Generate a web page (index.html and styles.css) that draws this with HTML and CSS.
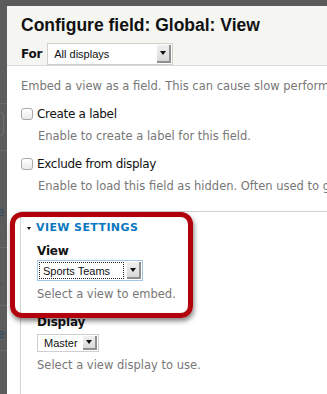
FILE: index.html
```html
<!DOCTYPE html>
<html>
<head>
<meta charset="utf-8">
<link rel="stylesheet" href="styles.css">
</head>
<body>
<div class="backdrop">
  <div class="under">
    <span class="uline" style="top:103px"></span>
    <span class="ubtn"></span>
    <span class="uline" style="top:150px"></span>
    <span class="uline" style="top:247px"></span>
    <span class="uline" style="top:305px"></span>
    <span class="uline" style="top:350px"></span>
    <span class="frag f1">e</span>
    <span class="frag f2">r</span>
    <span class="frag f3">e</span>
  </div>
  <div class="modal">
    <div class="header">
      <h1 class="title">Configure field: Global: View</h1>
      <div class="for-row">
        <span class="for-label">For</span>
        <div class="select sel-for">
          <span class="sel-text">All displays</span>
          <span class="sel-btn"><span class="arrow"></span></span>
        </div>
      </div>
    </div>
    <div class="body">
      <p class="intro">Embed a view as a field. This can cause slow performance.</p>
      <div class="check-item first">
        <div class="check-row"><span class="checkbox"></span><span class="check-label">Create a label</span></div>
        <div class="desc indent">Enable to create a label for this field.</div>
      </div>
      <div class="check-item">
        <div class="check-row"><span class="checkbox"></span><span class="check-label">Exclude from display</span></div>
        <div class="desc indent">Enable to load this field as hidden. Often used to group fields.</div>
      </div>
      <div class="fieldset">
        <div class="legend"><span class="tri"></span><span>VIEW SETTINGS</span></div>
        <div class="fs-body">
          <div class="form-item first">
            <div class="item-label">View</div>
            <div class="select sel-view">
              <span class="sel-text dotted">Sports Teams</span>
              <span class="sel-btn"><span class="arrow"></span></span>
            </div>
            <div class="desc">Select a view to embed.</div>
          </div>
          <div class="form-item second">
            <div class="item-label">Display</div>
            <div class="select sel-display">
              <span class="sel-text">Master</span>
              <span class="sel-btn"><span class="arrow"></span></span>
            </div>
            <div class="desc">Select a view display to use.</div>
          </div>
        </div>
      </div>
    </div>
    <div class="highlight"></div>
  </div>
</div>
</body>
</html>
```

FILE: styles.css
```css
html, body {
  margin: 0;
  padding: 0;
  width: 327px;
  height: 394px;
  overflow: hidden;
}
body {
  font-family: "DejaVu Sans", sans-serif;
  background: #5a5a5a;
}
.backdrop {
  position: relative;
  width: 327px;
  height: 394px;
  overflow: hidden;
  display: flex;
  background: #5a5a5a;
}
.under {
  position: absolute;
  left: 0;
  top: 0;
  width: 7px;
  height: 394px;
  background: #5c5c5c;
}
.uline {
  position: absolute;
  left: 0;
  width: 7px;
  height: 1px;
  background: #6a6a6a;
}
.ubtn {
  position: absolute;
  left: -6px;
  top: 112px;
  width: 8px;
  height: 22px;
  border: 1px solid #707070;
  border-radius: 4px;
}
.frag {
  position: absolute;
  left: -3px;
  font-family: "DejaVu Sans", sans-serif;
  font-size: 12px;
  line-height: 14px;
  color: #2f4d69;
}
.f1 { top: 205px; }
.f2 { top: 280px; }
.f3 { top: 327px; }
.modal {
  position: relative;
  margin: 6px 0 0 7px;
  flex: 1;
  min-width: 360px;
  background: #fff;
  display: flex;
  flex-direction: column;
}
.header {
  background: #f5f5f2;
  border-bottom: 1px solid #d9d9d6;
  padding: 9px 0 0 14px;
  height: 58px;
}
.title {
  margin: 0;
  font-family: "Liberation Sans", sans-serif;
  font-weight: bold;
  font-size: 17.5px;
  line-height: 20px;
  color: #111;
}
.for-row {
  display: flex;
  align-items: center;
  gap: 5px;
  margin-top: 8px;
  height: 22px;
}
.for-label {
  font-family: "DejaVu Sans", sans-serif;
  font-weight: bold;
  font-size: 12px;
  letter-spacing: -0.2px;
  line-height: 14px;
  color: #111;
}
.select {
  display: flex;
  align-items: stretch;
  background: #fff;
  border: 1px solid #cfcfcf;
  box-sizing: border-box;
  padding: 1px;
  font-family: "Liberation Sans", sans-serif;
  font-size: 11px;
  color: #111;
}
.sel-text {
  flex: 1;
  display: flex;
  align-items: center;
  padding-left: 5px;
}
.sel-btn {
  width: 12px;
  background: linear-gradient(#f0f0f0, #d9d9d9);
  border-right: 2px solid #8f8f8f;
  border-bottom: 2px solid #8f8f8f;
  display: flex;
  align-items: center;
  justify-content: center;
}
.arrow {
  width: 0;
  height: 0;
  border-left: 3.5px solid transparent;
  border-right: 3.5px solid transparent;
  border-top: 4px solid #111;
}
.sel-for {
  width: 126px;
  height: 22px;
}
.body {
  padding: 13px 0 0 14px;
  font-size: 11.5px;
  line-height: 14px;
}
.intro {
  margin: 0;
  color: #777;
  white-space: nowrap;
}
.check-item {
  margin-top: 14px;
}
.check-row {
  display: flex;
  align-items: flex-start;
  gap: 4px;
  height: 14px;
}
.checkbox {
  width: 10px;
  height: 10px;
  margin-top: 0.5px;
  border: 1px solid #a9a9a9;
  border-radius: 3px;
  background: linear-gradient(#ffffff, #e9e9e9);
}
.check-label {
  color: #111;
  font-size: 12px;
  letter-spacing: -0.3px;
}
.desc {
  color: #777;
  white-space: nowrap;
  margin-top: 8px;
}
.indent {
  padding-left: 17px;
}
.fieldset {
  margin-top: 18px;
  margin-left: -1px;
  border-top: 1px solid #d2d2d2;
  border-left: 1px solid #d2d2d2;
  padding: 9px 0 40px 6px;
}
.legend {
  display: flex;
  align-items: center;
  gap: 5px;
  color: #0a78c0;
  font-weight: bold;
  font-size: 11px;
  letter-spacing: 0.4px;
  line-height: 14px;
}
.tri {
  width: 0;
  height: 0;
  margin-top: 1px;
  border-left: 2.5px solid transparent;
  border-right: 2.5px solid transparent;
  border-top: 3.5px solid #111;
}
.fs-body {
  padding-left: 10px;
}
.form-item.first {
  margin-top: 9px;
}
.form-item.second {
  margin-top: 14px;
}
.item-label {
  font-weight: bold;
  font-size: 12px;
  letter-spacing: -0.2px;
  color: #111;
  line-height: 14px;
}
.sel-view {
  width: 106px;
  height: 21px;
  margin-top: 2px;
  border-color: #a3c6e8;
}
.dotted {
  margin-right: 3px;
  padding-left: 4px;
  outline: 1px dotted #222;
  outline-offset: -1px;
}
.sel-display {
  width: 62px;
  height: 18px;
  margin-top: 5px;
}
.form-item .desc {
  margin-top: 6px;
}
.highlight {
  position: absolute;
  left: 3px;
  top: 206px;
  width: 183px;
  height: 106px;
  box-sizing: border-box;
  border: 5px solid #b2000d;
  border-radius: 12px;
  box-shadow: 1px 3px 5px rgba(0,0,0,0.5), inset 0 0 1px rgba(0,0,0,0.3);
}
```
